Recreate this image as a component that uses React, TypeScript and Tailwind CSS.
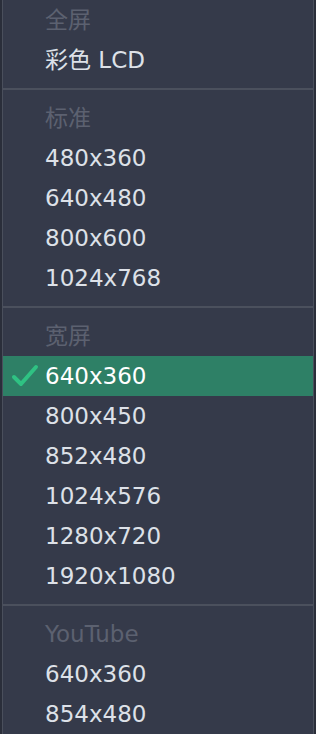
import React from 'react';

type Item = { label: string; header?: boolean; checked?: boolean };

const groups: Item[][] = [
  [{ label: '全屏', header: true }, { label: '彩色 LCD' }],
  [
    { label: '标准', header: true },
    { label: '480x360' },
    { label: '640x480' },
    { label: '800x600' },
    { label: '1024x768' },
  ],
  [
    { label: '宽屏', header: true },
    { label: '640x360', checked: true },
    { label: '800x450' },
    { label: '852x480' },
    { label: '1024x576' },
    { label: '1280x720' },
    { label: '1920x1080' },
  ],
  [{ label: 'YouTube', header: true }, { label: '640x360' }, { label: '854x480' }],
];

const Check = () => (
  <svg width="28" height="26" viewBox="0 0 28 26" fill="none">
    <path d="M3 14 L10 21 L25 4" stroke="#2fc283" strokeWidth="4" strokeLinecap="round" strokeLinejoin="round" />
  </svg>
);

export default function App() {
  return (
    <div
      className="w-[316px] h-[734px] overflow-hidden bg-[#2a2e3a] pl-[2px] pr-[2px]"
      style={{ fontFamily: '"DejaVu Sans", "Noto Sans CJK SC", sans-serif' }}
    >
      <div className="h-full bg-[#353a4a] border-l border-r border-[#4a4f5c]">
        {groups.map((group, gi) => (
          <div key={gi} className={gi > 0 ? 'border-t-2 border-[#4b505d] pt-[8px] mt-[8px]' : ''}>
            {group.map((item, i) => (
              <div
                key={i}
                className={`h-[40px] flex items-center text-[23px] ${
                  item.checked ? 'bg-[#2e8066] text-white' : item.header ? 'text-[#5c6170]' : 'text-[#dde1e8]'
                }`}
              >
                <div className="w-[42px] flex justify-center pl-[2px]">{item.checked && <Check />}</div>
                <span className="leading-none">{item.label}</span>
              </div>
            ))}
          </div>
        ))}
      </div>
    </div>
  );
}
